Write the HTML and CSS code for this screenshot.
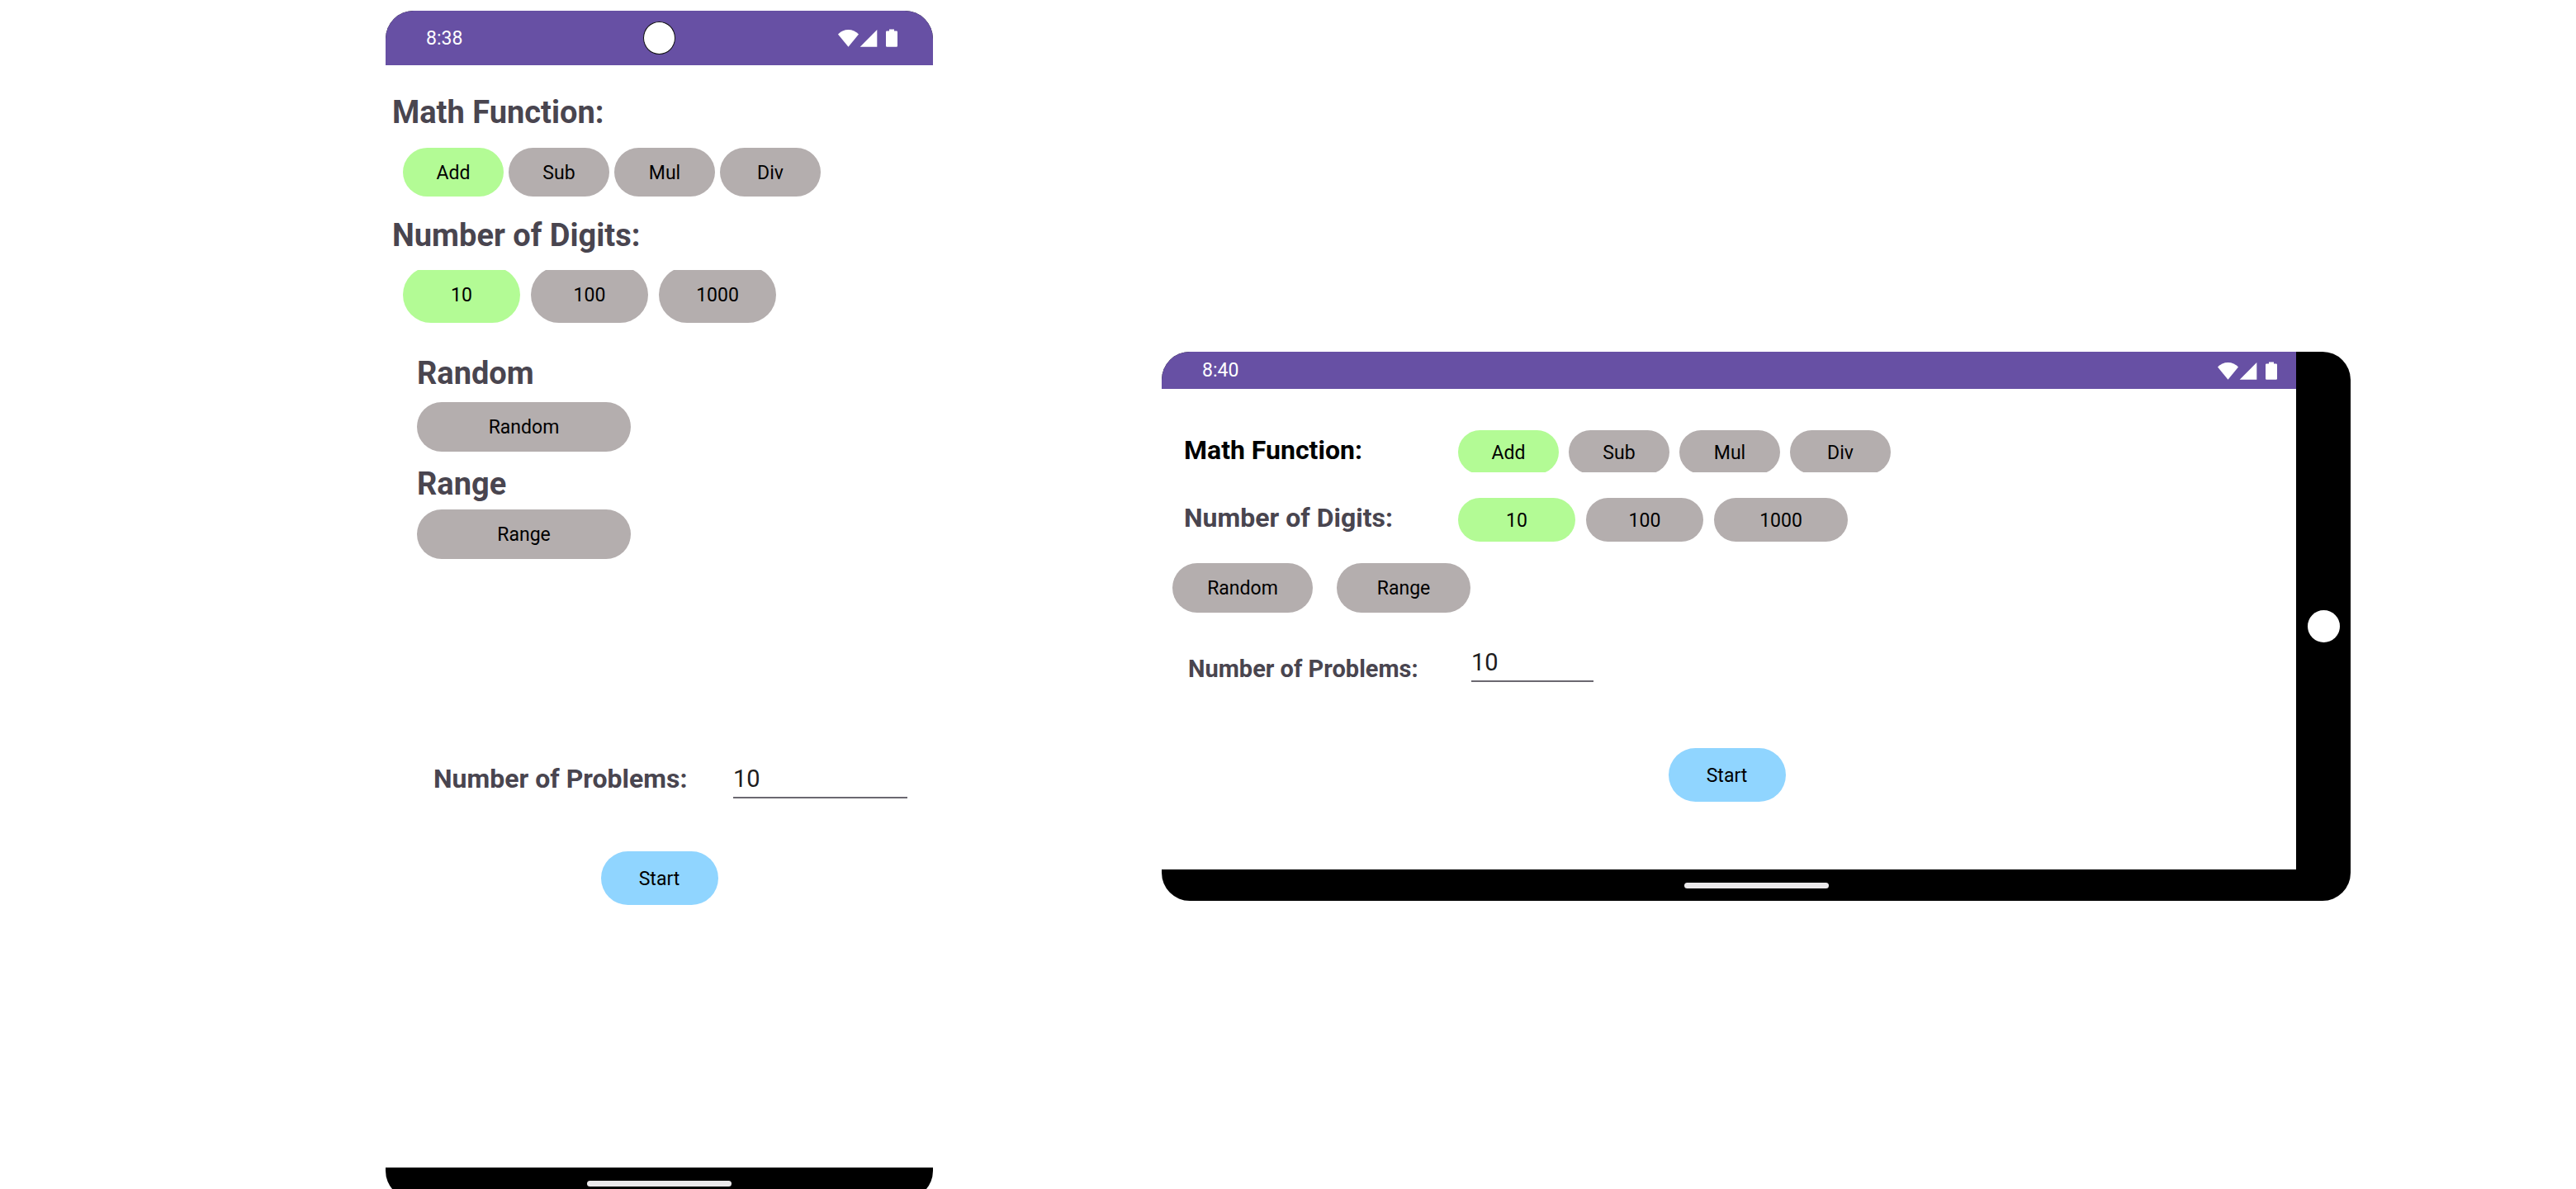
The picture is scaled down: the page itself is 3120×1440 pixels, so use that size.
FILE: index.html
```html
<!DOCTYPE html>
<html lang="en">
<head>
<meta charset="utf-8">
<title>Math Practice</title>
<link rel="stylesheet" href="styles.css">
</head>
<body>
<svg class="sprite" aria-hidden="true">
  <symbol id="status-icons" viewBox="0 0 72 22">
    <path d="M0 6.5A16.9 16.9 0 0 1 25 6.5L12.5 21.7Z"/>
    <path d="M26.7 21.7L47.3 1V21.7Z"/>
    <path d="M62 0.5H68V2.6H70.8Q72 2.6 72 3.8V20.5Q72 21.7 70.8 21.7H59.2Q58 21.7 58 20.5V3.8Q58 2.6 59.2 2.6H62Z"/>
  </symbol>
</svg>
<main class="stage">
  <section class="device portrait" aria-label="Portrait">
    <header class="status">
      <span class="time">8:38</span>
      <span class="camera camera-outlined"></span>
      <svg class="status-icons" aria-hidden="true"><use href="#status-icons"/></svg>
    </header>
    <form class="screen">
      <h2 class="title">Math Function:</h2>
      <div class="options functions">
        <button type="button" class="pill selected">Add</button>
        <button type="button" class="pill">Sub</button>
        <button type="button" class="pill">Mul</button>
        <button type="button" class="pill">Div</button>
      </div>
      <h2 class="title">Number of Digits:</h2>
      <div class="options digits">
        <button type="button" class="pill selected">10</button>
        <button type="button" class="pill">100</button>
        <button type="button" class="pill">1000</button>
      </div>
      <div class="modes">
        <h2 class="title">Random</h2>
        <button type="button" class="pill mode-random">Random</button>
        <h2 class="title">Range</h2>
        <button type="button" class="pill mode-range">Range</button>
      </div>
      <div class="problems">
        <label for="problems-portrait">Number of Problems:</label>
        <input id="problems-portrait" type="text" inputmode="numeric" value="10">
      </div>
      <button type="button" class="pill start">Start</button>
    </form>
    <footer class="nav"><span class="handle"></span></footer>
  </section>

  <section class="device landscape" aria-label="Landscape">
    <header class="status">
      <span class="time">8:40</span>
      <svg class="status-icons" aria-hidden="true"><use href="#status-icons"/></svg>
    </header>
    <form class="screen">
      <div class="row">
        <h2 class="title title-active">Math Function:</h2>
        <div class="options functions">
          <button type="button" class="pill selected">Add</button>
          <button type="button" class="pill">Sub</button>
          <button type="button" class="pill">Mul</button>
          <button type="button" class="pill">Div</button>
        </div>
      </div>
      <div class="row row-digits">
        <h2 class="title">Number of Digits:</h2>
        <div class="options digits">
          <button type="button" class="pill selected">10</button>
          <button type="button" class="pill">100</button>
          <button type="button" class="pill wide">1000</button>
        </div>
      </div>
      <div class="modes">
        <button type="button" class="pill mode-random">Random</button>
        <button type="button" class="pill mode-range">Range</button>
      </div>
      <div class="problems">
        <label for="problems-landscape">Number of Problems:</label>
        <input id="problems-landscape" type="text" inputmode="numeric" value="10">
      </div>
      <button type="button" class="pill start">Start</button>
    </form>
    <aside class="rail"><span class="camera"></span></aside>
    <footer class="nav"><span class="handle"></span></footer>
  </section>
</main>
</body>
</html>
```

FILE: styles.css
```css
* { box-sizing: border-box; }

body {
  margin: 0;
  background: #fff;
  color: #49454f;
  font-family: Roboto, "Liberation Sans", sans-serif;
}

.sprite { display: none; }

.stage {
  display: grid;
  grid-template-columns: 467fr minmax(auto, 663fr) 277fr minmax(auto, 1440fr) 273fr;
  align-items: start;
  height: 100vh;
  overflow: hidden;
}

.device {
  display: grid;
  overflow: hidden;
  border-radius: 34px;
  background: #000;
}

.portrait {
  grid-column: 2;
  grid-template-rows: 66px 1fr 38px;
  min-height: 1439px;
  margin-top: 13px;
}

.landscape {
  grid-column: 4;
  grid-template-columns: 1fr 66px;
  grid-template-rows: 45px 1fr 38px;
  min-height: 665px;
  margin-top: 426px;
}

/* System bars */
.status {
  display: flex;
  align-items: center;
  justify-content: space-between;
  padding: 0 23px 0 43px;
  background: #6750a4;
  color: #fff;
  font-size: 23px;
}

.time { padding-left: 6px; }

.portrait .status {
  display: grid;
  grid-template-columns: 1fr auto 1fr;
  padding: 0 43px;
}

.portrait .status-icons { justify-self: end; }

.status-icons {
  width: 72px;
  height: 22px;
  fill: #fff;
}

.camera {
  width: 39px;
  height: 39px;
  border-radius: 50%;
  background: #fff;
}

.camera-outlined {
  height: 40px;
  border: 1px solid #111;
}

.rail {
  display: flex;
  grid-row: 1 / 4;
  grid-column: 2;
  align-items: center;
  justify-content: center;
}

.nav {
  display: flex;
  justify-content: center;
  padding-top: 16px;
}

.landscape .nav {
  grid-row: 3;
  grid-column: 1 / 3;
}

.handle {
  width: 175px;
  height: 7px;
  border-radius: 4px;
  background: #ebe9eb;
}

/* Shared controls */
.screen {
  display: flex;
  flex-direction: column;
  background: #fff;
}

.title,
.problems label {
  margin: 0;
  font-size: 32px;
  font-weight: 700;
}

.pill {
  flex: none;
  min-width: 142px;
  height: 60px;
  padding: 2px 24px 0;
  border: 0;
  border-radius: 34px;
  background: #b4aeae;
  color: #000;
  font: 400 23px/26px Roboto, "Liberation Sans", sans-serif;
}

.selected { background: #b3fb95; }

.functions .pill { min-width: 122px; }

.start {
  align-self: center;
  height: 65px;
  background: #90d5ff;
}

.options {
  display: flex;
  gap: 13px;
  overflow: hidden;
}

.problems {
  display: flex;
  align-items: flex-start;
}

.problems input {
  width: 148px;
  height: 46px;
  padding: 0;
  border: 0;
  border-bottom: 2px solid #6b6870;
  border-radius: 0;
  outline: 0;
  background: none;
  color: #1d1b20;
  font: 400 29px/44px Roboto, "Liberation Sans", sans-serif;
}

/* Portrait */
.portrait .screen { padding-top: 35px; }

.portrait .title {
  padding-left: 8px;
  font-size: 38px;
  line-height: 44px;
}

.portrait .functions {
  gap: 6px;
  margin: 21px 21px 25px;
}

.portrait .functions .pill { height: 59px; }

.portrait .digits {
  align-items: flex-end;
  height: 64px;
  margin: 20px 21px 39px;
}

.portrait .digits .pill { height: 68px; }

.portrait .modes {
  display: flex;
  flex-direction: column;
  align-items: flex-start;
  padding-left: 38px;
}

.portrait .modes .title { padding-left: 0; }
.portrait .modes .pill { min-width: 259px; }
.portrait .mode-random { margin: 13px 0 17px; }
.portrait .mode-range { margin-top: 9px; }

.portrait .problems {
  justify-content: space-between;
  margin: 244px 31px 64px 58px;
}

.portrait .problems label { line-height: 44px; }
.portrait .problems input { width: 211px; }

/* Landscape */
.landscape .screen { padding-top: 50px; }

.row {
  display: flex;
  align-items: flex-start;
  padding-left: 27px;
}

.row-digits { margin: 31px 0 26px; }

.row .title {
  width: 332px;
  line-height: 48px;
}

.title-active { color: #000; }

.landscape .functions {
  gap: 12px;
  height: 51px;
}

.landscape .options .pill { height: 53px; }
.landscape .wide,
.landscape .mode-range { min-width: 162px; }
.landscape .mode-random { min-width: 170px; }

.landscape .modes {
  display: flex;
  gap: 29px;
  padding-left: 13px;
}

.landscape .problems {
  margin: 38px 0 66px;
  padding-left: 32px;
}

.landscape .problems label {
  width: 343px;
  font-size: 29px;
  line-height: 60px;
}

.landscape .start { margin-right: 5px; }
```
